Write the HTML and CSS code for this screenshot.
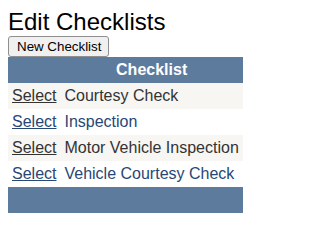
FILE: index.html
```html
<!DOCTYPE html>
<html>
<head>
<meta charset="utf-8">
<link rel="stylesheet" href="styles.css">
</head>
<body>
<h1 class="title">Edit Checklists</h1>
<button class="new-btn" type="button">New Checklist</button>
<table class="grid">
  <tr class="grid-head"><th></th><th>Checklist</th></tr>
  <tr class="row"><td><a href="#">Select</a></td><td>Courtesy Check</td></tr>
  <tr class="alt"><td><a href="#">Select</a></td><td>Inspection</td></tr>
  <tr class="row"><td><a href="#">Select</a></td><td>Motor Vehicle Inspection</td></tr>
  <tr class="alt"><td><a href="#">Select</a></td><td>Vehicle Courtesy Check</td></tr>
  <tr class="grid-foot"><td>&nbsp;</td><td>&nbsp;</td></tr>
</table>
</body>
</html>
```

FILE: styles.css
```css
body {
  margin: 8px;
  font-family: "Liberation Sans", Arial, sans-serif;
  font-size: 16px;
  background: #fff;
  color: #000;
}
.title {
  margin: 0;
  font-size: 24px;
  font-weight: normal;
  line-height: normal;
}
.new-btn {
  display: block;
  font-family: "Liberation Sans", Arial, sans-serif;
  font-size: 13.333px;
  padding: 1px 7px 1px 8px;
  margin: 0;
  background: #f0f0f0;
  border: 1px solid #8f8f8f;
  border-radius: 3px;
  color: #000;
  height: 21px;
}
.grid {
  border-collapse: collapse;
  border-spacing: 0;
  color: #333333;
}
.grid th, .grid td {
  padding: 4px;
  text-align: left;
  white-space: nowrap;
}
.grid-head {
  background: #5d7b9d;
  color: #fff;
}
.grid-head th {
  font-weight: bold;
  text-align: center;
}
.row {
  background: #f7f6f3;
  color: #333333;
}
.alt {
  background: #fff;
  color: #284775;
}
.grid a {
  color: inherit;
  text-decoration: underline;
}
.grid-foot {
  background: #5d7b9d;
  color: #fff;
  font-weight: bold;
}
```
